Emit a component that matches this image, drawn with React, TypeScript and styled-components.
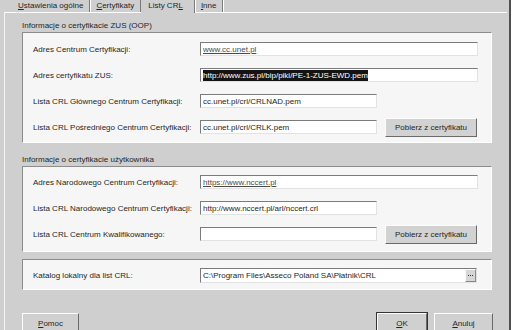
import React from 'react';
import styled, { createGlobalStyle, css } from 'styled-components';

const GlobalStyle = createGlobalStyle`
    body {
        margin: 0;
        background: #fff;
        font-family: 'Liberation Sans', Arial, sans-serif;
        font-size: 8px;
        color: #262626;
    }
`;

const tabs = ['Ustawienia ogólne', 'Certyfikaty', 'Listy CRL', 'Inne'];

export default function App(): JSX.Element {
    return (
        <Screen>
            <GlobalStyle />
            <Dialog>
                <TabStrip>
                    {tabs.map(t => (
                        <Tab key={t} $active={t === 'Listy CRL'}>
                            {t === 'Listy CRL' ? (
                                <>
                                    Listy CR<u>L</u>
                                </>
                            ) : (
                                <>
                                    <u>{t[0]}</u>
                                    {t.slice(1)}
                                </>
                            )}
                        </Tab>
                    ))}
                </TabStrip>

                <TabPage>
                    <GroupTitle>Informacje o certyfikacie ZUS (OOP)</GroupTitle>
                    <Panel $pad="3px 0 2px">
                        <Row>
                            <Label>Adres Centrum Certyfikacji:</Label>
                            <Field $width={278}>
                                <LinkText>www.cc.unet.pl</LinkText>
                            </Field>
                        </Row>
                        <Row>
                            <Label>Adres certyfikatu ZUS:</Label>
                            <Field $width={278}>
                                <Selected>http://www.zus.pl/bip/piki/PE-1-ZUS-EWD.pem</Selected>
                            </Field>
                        </Row>
                        <Row>
                            <Label>Lista CRL Głównego Centrum Certyfikacji:</Label>
                            <Field $width={177}>cc.unet.pl/crl/CRLNAD.pem</Field>
                        </Row>
                        <Row>
                            <Label>Lista CRL Pośredniego Centrum Certyfikacji:</Label>
                            <Field $width={177}>cc.unet.pl/crl/CRLK.pem</Field>
                            <Button>Pobierz z certyfikatu</Button>
                        </Row>
                    </Panel>

                    <GroupTitle $gap={10}>Informacje o certyfikacie użytkownika</GroupTitle>
                    <Panel $pad="2px 0 4px">
                        <Row>
                            <Label>Adres Narodowego Centrum Certyfikacji:</Label>
                            <Field $width={278}>
                                <LinkText>https://www.nccert.pl</LinkText>
                            </Field>
                        </Row>
                        <Row>
                            <Label>Lista CRL Narodowego Centrum Certyfikacji:</Label>
                            <Field $width={177}>http://www.nccert.pl/arl/nccert.crl</Field>
                        </Row>
                        <Row>
                            <Label>Lista CRL Centrum Kwalifikowanego:</Label>
                            <Field $width={177} />
                            <Button>Pobierz z certyfikatu</Button>
                        </Row>
                    </Panel>

                    <Panel $pad="2px 0 1px" $gap={7}>
                        <Row>
                            <Label>Katalog lokalny dla list CRL:</Label>
                            <Field $width={277} $tall>
                                <FieldText>C:\Program Files\Asseco Poland SA\Płatnik\CRL</FieldText>
                                <Browse>
                                    <Dot />
                                    <Dot />
                                    <Dot />
                                </Browse>
                            </Field>
                        </Row>
                    </Panel>

                    <ButtonBar>
                        <DialogButton $width={57}>
                            <u>P</u>omoc
                        </DialogButton>
                        <Spacer />
                        <DialogButton $width={50} $default>
                            <u>O</u>K
                        </DialogButton>
                        <DialogButton $width={59}>
                            <u>A</u>nuluj
                        </DialogButton>
                    </ButtonBar>
                </TabPage>
            </Dialog>
        </Screen>
    );
}

const Screen = styled.div`
    display: flex;
    width: 527px;
    height: 330px;
    overflow: hidden;
    background: #fff;
`;

const Dialog = styled.div`
    width: 509px;
    flex: none;
    display: flex;
    flex-direction: column;
    background: #cfcfcf;
    border-right: 2px solid #4f4f4f;
`;

const TabStrip = styled.div`
    height: 12px;
    display: flex;
    padding-left: 12px;
    flex: none;
`;

interface TabProps {
    $active?: boolean;
}

const Tab = styled.div<TabProps>`
    padding: 0 6px;
    line-height: 11px;
    white-space: nowrap;
    border-right: 1px solid #7a7a7a;
    box-shadow: 1px 0 0 #fff;

    ${props =>
        props.$active &&
        css`
            padding: 0 11px 0 7px;
            position: relative;
            z-index: 1;
            margin-bottom: -1px;
            background: #cfcfcf;
        `}
`;

const TabPage = styled.div`
    flex: 1;
    display: flex;
    flex-direction: column;
    margin: 0 2px 0 4px;
    padding: 0 15px 0 17px;
    border-top: 1px solid #fff;
    border-left: 1px solid #f4f4f4;
`;

const GroupTitle = styled.div<{ $gap?: number }>`
    margin-top: ${props => props.$gap ?? 6}px;
    line-height: 13px;
    white-space: nowrap;
`;

const Panel = styled.div<{ $pad: string; $gap?: number }>`
    margin-top: ${props => props.$gap ?? 0}px;
    padding: ${props => props.$pad};
    background: #f6f6f6;
    border: 1px solid;
    border-color: #8c8c8c #fff #fff #8c8c8c;
`;

const Row = styled.div`
    height: 26px;
    display: flex;
    align-items: center;
    padding-left: 10px;
`;

const Label = styled.div`
    width: 167px;
    flex: none;
    white-space: nowrap;
`;

const Field = styled.div<{ $width: number; $tall?: boolean }>`
    width: ${props => props.$width}px;
    height: ${props => (props.$tall ? 15 : 14)}px;
    box-sizing: border-box;
    display: flex;
    align-items: center;
    padding-left: 2px;
    background: #fff;
    border: 1px solid;
    border-color: #7b7b7b #e2e2e2 #e2e2e2 #7b7b7b;
    white-space: nowrap;
    overflow: hidden;
    flex: none;
`;

const FieldText = styled.span`
    flex: 1;
`;

const LinkText = styled.span`
    color: #4a4a4a;
    text-decoration: underline;
`;

const Selected = styled.span`
    background: #141414;
    color: #fff;
    line-height: 11px;
`;

const Browse = styled.div`
    width: 11px;
    height: 13px;
    box-sizing: border-box;
    flex: none;
    display: flex;
    align-items: center;
    justify-content: center;
    gap: 1px;
    background: #d6d6d6;
    border: 1px solid;
    border-color: #fafafa #8a8a8a #8a8a8a #fafafa;
`;

const Dot = styled.span`
    width: 1px;
    height: 1px;
    background: #333;
`;

const Button = styled.div`
    width: 92px;
    height: 19px;
    box-sizing: border-box;
    margin-left: 8px;
    display: flex;
    align-items: center;
    justify-content: center;
    background: #d2d2d2;
    border: 1px solid;
    border-color: #fdfdfd #6a6a6a #6a6a6a #fdfdfd;
    white-space: nowrap;
`;

const ButtonBar = styled.div`
    margin-top: 23px;
    margin-right: -1px;
    display: flex;
    gap: 7px;
`;

const Spacer = styled.div`
    flex: 1;
`;

interface DialogButtonProps {
    $width: number;
    $default?: boolean;
}

const DialogButton = styled.div<DialogButtonProps>`
    width: ${props => props.$width}px;
    height: 22px;
    box-sizing: border-box;
    flex: none;
    display: flex;
    justify-content: center;
    padding-top: 5px;
    background: #d0d0d0;
    border: 1px solid;
    border-color: #fdfdfd #6a6a6a #6a6a6a #fdfdfd;

    ${props =>
        props.$default &&
        css`
            outline: 1px solid #333;
        `}
`;
